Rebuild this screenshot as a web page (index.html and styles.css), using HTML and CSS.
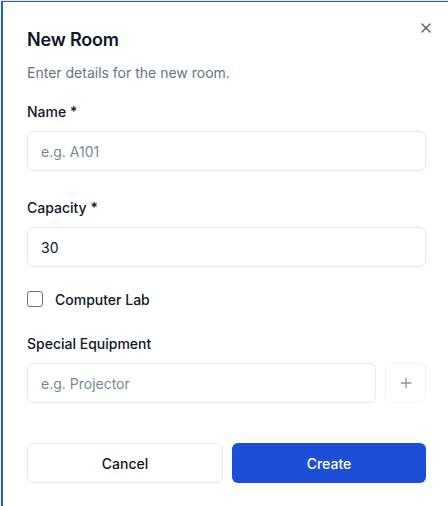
FILE: index.html
```html
<!DOCTYPE html>
<html lang="en">
<head>
    <meta charset="UTF-8">
    <meta name="viewport" content="width=device-width, initial-scale=1.0">
    <title>New Room</title>
    <link rel="stylesheet" href="styles.css">
</head>
<body>
    <div class="page">
        <div class="dialog" role="dialog">
            <button class="close-btn" aria-label="Close">
                <svg width="16" height="16" viewBox="0 0 24 24" fill="none" stroke="currentColor" stroke-width="2" stroke-linecap="round" stroke-linejoin="round"><path d="M18 6 6 18"/><path d="m6 6 12 12"/></svg>
            </button>

            <h2 class="title">New Room</h2>
            <p class="subtitle">Enter details for the new room.</p>

            <form class="form">
                <div class="field">
                    <label class="label" for="name">Name *</label>
                    <input class="input" id="name" type="text" placeholder="e.g. A101">
                </div>

                <div class="field">
                    <label class="label" for="capacity">Capacity *</label>
                    <input class="input" id="capacity" type="text" value="30">
                </div>

                <label class="check-row">
                    <span class="checkbox"></span>
                    <span class="check-label">Computer Lab</span>
                </label>

                <div class="field">
                    <label class="label" for="equipment">Special Equipment</label>
                    <div class="equip-row">
                        <input class="input" id="equipment" type="text" placeholder="e.g. Projector">
                        <button type="button" class="add-btn" disabled>
                            <svg width="16" height="16" viewBox="0 0 24 24" fill="none" stroke="currentColor" stroke-width="2" stroke-linecap="round" stroke-linejoin="round"><path d="M5 12h14"/><path d="M12 5v14"/></svg>
                        </button>
                    </div>
                </div>

                <!-- footer buttons -->
                <div class="actions">
                    <button type="button" class="btn btn-outline">Cancel</button>
                    <button type="button" class="btn btn-primary">Create</button>
                </div>
            </form>
        </div>
    </div>
</body>
</html>
```

FILE: styles.css
```css
* {
    box-sizing: border-box;
}
html, body {
    margin: 0;
    height: 100%;
    overflow: hidden;
}
body {
    font-family: Inter, "Noto Sans", sans-serif;
    color: #0f172a;
    background: #fff;
}
.page {
    height: 100%;
    border-top: 1px solid #f1e3e7;
    padding-left: 1px;
}
.dialog {
    position: relative;
    height: 100%;
    border-top: 1px solid #1d5fd6;
    border-left: 2px solid #1a60d4;
    padding: 24px 22px 0 24px;
}
.close-btn {
    position: absolute;
    top: 18px;
    right: 14px;
    padding: 0;
    border: none;
    background: none;
    color: #0f172a;
    opacity: 0.7;
    display: flex;
}
.title {
    margin: 0;
    font-size: 18px;
    line-height: 28px;
    font-weight: 600;
    letter-spacing: -0.2px;
}
.subtitle {
    margin: 9px 0 0;
    font-size: 14px;
    line-height: 20px;
    color: #64748b;
}
.form {
    margin-top: 19px;
}
.field {
    display: flex;
    flex-direction: column;
    gap: 9px;
}
.label {
    font-size: 14px;
    line-height: 20px;
    font-weight: 500;
}
.input {
    width: 100%;
    height: 40px;
    border: 1px solid #e2e8f0;
    border-radius: 6px;
    padding: 0 13px;
    font-family: inherit;
    font-size: 14px;
    color: #0f172a;
    background: #fff;
    outline: none;
}
.input::placeholder {
    color: #7a879b;
}
.field + .field {
    margin-top: 27px;
}
.check-row {
    display: flex;
    align-items: center;
    gap: 12px;
    height: 20px;
    margin: 22px 0 25px;
}
.checkbox {
    width: 16px;
    height: 16px;
    border: 1px solid #6b7280;
    border-radius: 3px;
}
.check-label {
    font-size: 14px;
    font-weight: 500;
}
.equip-row {
    display: flex;
    gap: 9px;
}
.equip-row .input {
    flex: 1;
}
.add-btn {
    flex: none;
    width: 41px;
    height: 40px;
    border: 1px solid #e2e8f0;
    border-radius: 6px;
    background: #fff;
    color: #1e293b;
    opacity: 0.5;
    display: flex;
    align-items: center;
    justify-content: center;
    padding: 0;
}
.actions {
    display: flex;
    gap: 9px;
    margin-top: 40px;
}
.btn {
    flex: 1;
    height: 40px;
    border-radius: 6px;
    font-family: inherit;
    font-size: 14px;
    font-weight: 500;
    cursor: pointer;
}
.btn-outline {
    border: 1px solid #e2e8f0;
    background: #fff;
    color: #0f172a;
}
.btn-primary {
    border: none;
    background: #1d4ed8;
    color: #fff;
}
```
